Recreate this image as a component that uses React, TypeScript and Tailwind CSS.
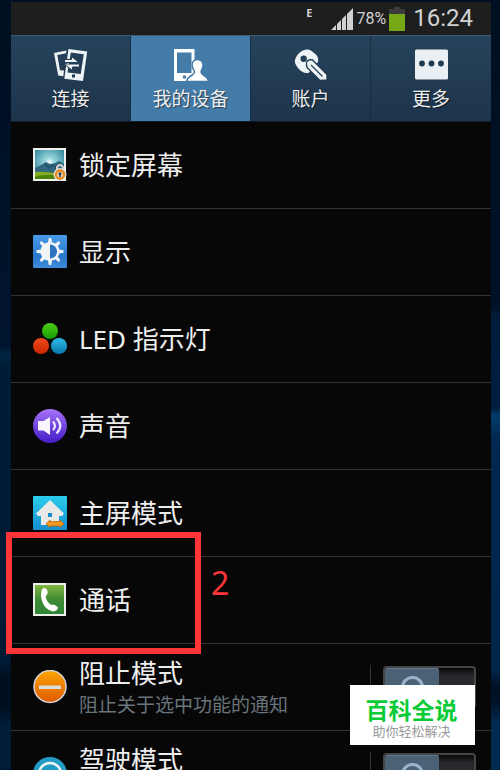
import React from "react";

const FONT = "font-['Noto_Sans','Noto_Sans_CJK_SC',sans-serif]";

function ConnectIcon() {
  return (
    <svg width="34" height="34" viewBox="0 0 34 34" aria-hidden="true">
      <path d="M12.500 2.500 L0 5 L4.200 27.500 L9.300 28.300 L10 22.500 L6 22.300 L3.300 7 L12 5.300 Z" fill="#eef3f5" />
      <path d="M14.500 1 L33.200 3.500 L29 33 L10.300 30.800 Z M16.800 4.500 L13.500 24.500 L26.700 26 L29.800 6.300 Z" fill="#eef3f5" fillRule="evenodd" />
      <path d="M10.500 11.500 H17.500 V8.500 L25 14.500 H10.500 Z M10 16 H25.500 V19 H18.500 V22.500 Z" fill="#eef3f5" stroke="#233e54" strokeWidth="1" />
      <rect x="18" y="26.500" width="3" height="3" fill="#213a50" />
    </svg>
  );
}

function DeviceIcon() {
  return (
    <svg width="34" height="34" viewBox="0 0 34 34" aria-hidden="true">
      <path d="M0 1 H20.500 V33 H0 Z M3 4.500 V25 H17.500 V4.500 Z" fill="#fff" fillRule="evenodd" />
      <rect x="9" y="27.500" width="3" height="3" fill="#447aa8" />
      <path d="M23.500 11.500 C19.500 11.500 17.800 14.300 18.200 18 C18.400 20.500 20.300 22 20.500 24 C20.500 28 13.500 27 12.500 33.500 H34.500 C34 27.500 27 28 27 24 C27.200 22 28.800 20.500 29 18 C29.300 14.300 27.500 11.500 23.500 11.500 Z" fill="#fff" stroke="#447aa8" strokeWidth="1.500" />
    </svg>
  );
}

function KeyIcon() {
  return (
    <svg width="34" height="34" viewBox="0 0 34 34" aria-hidden="true">
      <path d="M9 2.500 C12 1 15 1 17.500 3 L22 6.500 C24 9 24.500 11 24 14 L14.500 25 C9 25.500 4 22 1 15 C0 10 5 4 9 2.500 Z M6.500 10.700 A3.200 3.200 0 1 0 12.900 10.700 A3.200 3.200 0 1 0 6.500 10.700 Z" fill="#eef3f5" fillRule="evenodd" />
      <path d="M12.500 17 C11.500 13.500 14.500 11 18.500 12 L33 26.500 V32 L26 32.500 L13 19.500 Z" fill="#eef3f5" stroke="#233e54" strokeWidth="1.400" />
      <path d="M17 17 L28.500 28.500" stroke="#29445a" strokeWidth="1.200" />
    </svg>
  );
}

function MoreIcon() {
  return (
    <svg width="34" height="34" viewBox="0 0 34 34" aria-hidden="true">
      <rect x="1" y="1.500" width="33" height="30" rx="1.500" fill="#e9eff2" />
      {[8, 17.5, 27].map((x) => (
        <circle key={x} cx={x} cy="15.500" r="2.900" fill="#1d3a50" />
      ))}
    </svg>
  );
}

function LockScreenIcon() {
  return (
    <svg width="34" height="34" viewBox="0 0 34 34" aria-hidden="true">
      <defs>
        <radialGradient id="sky" cx=".5" cy=".42" r=".6">
          <stop offset="0" stopColor="#fff" />
          <stop offset=".25" stopColor="#9ad8dc" />
          <stop offset="1" stopColor="#388ca0" />
        </radialGradient>
      </defs>
      <rect width="33" height="33" fill="#f1f1ee" />
      <rect x="2" y="2" width="29" height="29" fill="url(#sky)" />
      <path d="M2 20 L8 17 L13 14 L17 16 L21 15.500 L26 13 L31 16 V27 H2 Z" fill="#326780" />
      <path d="M12 16 L16 20 L20 17 L24 21" fill="none" stroke="#244f68" strokeWidth="1.500" />
      <path d="M2 24 Q14 23 31 27 V31 H2 Z" fill="#83ad20" />
      <path d="M2 28.500 Q14 26 31 28 V31 H2 Z" fill="#4f8109" />
      <path d="M24 22 V19 Q27 15 30 19 V22" fill="none" stroke="#d5d3cf" strokeWidth="2" />
      <circle cx="27" cy="26.500" r="6.500" fill="#ddd" />
      <circle cx="27" cy="26.500" r="4" fill="none" stroke="#e88a18" strokeWidth="2.300" />
      <circle cx="27" cy="25.800" r="1.500" fill="#333" />
      <path d="M26.300 26 H27.700 V29 H26.300 Z" fill="#333" />
    </svg>
  );
}

function DisplayIcon() {
  return (
    <svg width="34" height="34" viewBox="0 0 34 34" aria-hidden="true">
      <defs>
        <linearGradient id="blue" x2="0" y2="1">
          <stop stopColor="#479be9" />
          <stop offset=".65" stopColor="#2877c8" />
          <stop offset="1" stopColor="#408bdc" />
        </linearGradient>
      </defs>
      <rect width="34" height="33" rx="1" fill="url(#blue)" />
      {[0, 45, 90, 135, 180, 225, 270, 315].map((a) => (
        <path key={a} d="M14.800 9 L15.800 3 H18.200 L19.200 9 Z" fill="#f1f4f6" transform={"rotate(" + a + " 17 16.500)"} />
      ))}
      <circle cx="17" cy="16.500" r="9.500" fill="#f1f4f6" />
      <path d="M17 9.500 A7 7 0 0 1 17 23.500 Z" fill="#2d75be" />
    </svg>
  );
}

function LedIcon() {
  return (
    <svg width="34" height="34" viewBox="0 0 34 34" aria-hidden="true">
      <defs>
        <linearGradient id="green" x2="0" y2="1"><stop stopColor="#4fcd13" /><stop offset="1" stopColor="#159c03" /></linearGradient>
        <linearGradient id="red" x2="0" y2="1"><stop stopColor="#ed4b1c" /><stop offset="1" stopColor="#c82500" /></linearGradient>
        <linearGradient id="cyan" x2="0" y2="1"><stop stopColor="#31bce8" /><stop offset="1" stopColor="#0876aa" /></linearGradient>
      </defs>
      <circle cx="17" cy="9" r="8" fill="url(#green)" />
      <circle cx="8" cy="24" r="8" fill="url(#red)" />
      <circle cx="26" cy="24" r="8" fill="url(#cyan)" />
    </svg>
  );
}

function SoundIcon() {
  return (
    <svg width="34" height="34" viewBox="0 0 34 34" aria-hidden="true">
      <defs>
        <linearGradient id="violet" x2="0" y2="1"><stop stopColor="#a873fa" /><stop offset=".5" stopColor="#7346df" /><stop offset="1" stopColor="#421cc5" /></linearGradient>
      </defs>
      <circle cx="17" cy="17" r="17" fill="url(#violet)" />
      <path d="M5 12 H10.500 L17 8 V26 L10.500 21.500 H5 Z" fill="#f7f4ff" />
      <path d="M20 12.500 Q24 17 20 21 M23.500 9 Q31 17 23.500 24.500" fill="none" stroke="#eee9ff" strokeWidth="2.200" />
    </svg>
  );
}

function HomeIcon() {
  return (
    <svg width="34" height="34" viewBox="0 0 34 34" aria-hidden="true">
      <defs>
        <linearGradient id="aqua" x2="0" y2="1"><stop stopColor="#2bcdeb" /><stop offset="1" stopColor="#168ed0" /></linearGradient>
      </defs>
      <rect width="34" height="34" rx="1" fill="url(#aqua)" />
      <path d="M17 4 L31 17.500 L29 20 H26 V29 H8 V20 H5 L3 17.500 Z" fill="#e9e9e7" />
      <rect x="15" y="17" width="4" height="4" fill="#1590c8" />
      <path d="M13 27.800 L17 24 V25.500 H27 V24 L31 27.800 L27 31.500 V30 H17 V31.500 Z" fill="#ee971e" stroke="#b85b08" strokeWidth=".7" />
    </svg>
  );
}

function CallIcon() {
  return (
    <svg width="34" height="34" viewBox="0 0 34 34" aria-hidden="true">
      <defs>
        <linearGradient id="leaf" x2="0" y2="1"><stop stopColor="#82b63f" /><stop offset=".5" stopColor="#3e8b33" /><stop offset="1" stopColor="#2f8536" /></linearGradient>
      </defs>
      <rect width="33" height="33" fill="#ededeb" />
      <rect x="2" y="2" width="29" height="29" fill="url(#leaf)" />
      <path d="M9 6.500 Q11 4 13.500 6 Q15.500 9 14 11.500 L12.500 13.500 Q13.500 18.500 18 22 Q21 20 25 24.500 Q24.500 28 20 28.500 Q12 27 9 18 Q7 11 9 6.500 Z" fill="#fff" />
    </svg>
  );
}

function BlockIcon() {
  return (
    <svg width="34" height="34" viewBox="0 0 34 34" aria-hidden="true">
      <defs>
        <linearGradient id="orange" x2="0" y2="1"><stop stopColor="#fba405" /><stop offset="1" stopColor="#df5a00" /></linearGradient>
      </defs>
      <circle cx="17" cy="16.500" r="16" fill="url(#orange)" stroke="#d5d5dc" strokeWidth="1.500" />
      <rect x="6" y="15.500" width="22" height="3.500" fill="#ddd" />
    </svg>
  );
}

function DriveIcon() {
  return (
    <svg width="34" height="34" viewBox="0 0 34 34" aria-hidden="true">
      <circle cx="17" cy="17" r="17" fill="#239bc5" />
      <circle cx="17" cy="17" r="11" fill="none" stroke="#f0f5f7" strokeWidth="2.500" />
      <path d="M9 16 Q17 10 25 16 L20 19 V26 H14 V19 Z" fill="#f0f5f7" />
    </svg>
  );
}

const tabs = [
  { label: "连接", icon: <ConnectIcon /> },
  { label: "我的设备", icon: <DeviceIcon />, active: true },
  { label: "账户", icon: <KeyIcon /> },
  { label: "更多", icon: <MoreIcon /> },
];

const rows = [
  { label: "锁定屏幕", icon: <LockScreenIcon /> },
  { label: "显示", icon: <DisplayIcon /> },
  { label: "LED 指示灯", icon: <LedIcon /> },
  { label: "声音", icon: <SoundIcon /> },
  { label: "主屏模式", icon: <HomeIcon /> },
  { label: "通话", icon: <CallIcon />, marked: true },
];

const modes = [
  { label: "阻止模式", detail: "阻止关于选中功能的通知", icon: <BlockIcon /> },
  { label: "驾驶模式", detail: "", icon: <DriveIcon /> },
];

function StatusBar() {
  return (
    <header className="flex h-[33px] items-center justify-end bg-[#1e1e1e] pr-[18px] text-[#d2d2d2]">
      <span className="mr-[18px] mb-3 text-[11px] leading-4 font-bold">E</span>
      <svg width="22" height="22" viewBox="0 0 22 22" aria-hidden="true">
        <path d="M0 22 L5 17 V22 Z M6 16 L10 12 V22 H6 Z M11 11 L15 7 V22 H11 Z M16 6 L22 0 V22 H16 Z" fill="#d2d2d2" />
      </svg>
      <span className="ml-1 text-base leading-6 font-['Roboto',sans-serif]">78%</span>
      <svg className="mr-2 ml-[3px]" width="16" height="24" viewBox="0 0 16 24" aria-hidden="true">
        <path d="M5 0 H11 V2 H16 V24 H0 V2 H5 Z" fill="#3b3b3b" />
        <rect y="7" width="16" height="17" fill="#77a817" />
      </svg>
      <time className="pb-px text-2xl leading-8 font-['Roboto',sans-serif]">16:24</time>
    </header>
  );
}

function ModeSwitch({ label }: { label: string }) {
  return (
    <label className="relative h-[42px] w-[93px] overflow-hidden rounded-[4px] border-2 border-[#454545] bg-linear-to-b from-[#08080a] to-[#29292d] to-20%">
      <input type="checkbox" aria-label={label} className="absolute inset-0 z-10 size-full opacity-0" />
      <span className="flex h-full w-[54px] items-center justify-center rounded-[2px] border-t border-[#62798e] bg-[#4b6175]">
        <span className="size-[23px] rounded-full border-[3px] border-[#9bb4cd]" />
      </span>
    </label>
  );
}

export default function App() {
  return (
    <div className={`relative flex h-screen overflow-hidden bg-[#001022] text-[#eee] ${FONT}`}>
      <div className="w-[11px] shrink-0 bg-[linear-gradient(#001022,#001228_30%,#00162e_45%,#002442_46%,#001b35_48%,#001a33_86%,#000f20_88%,#000f20_92%,#001c38_94%)]" />
      <div className="min-w-0 flex-1 pt-[2px]">
        <StatusBar />
        <nav className="grid h-[87px] grid-cols-4 border-t border-b border-t-[#395a72] border-b-[#101c28] bg-linear-to-b from-[#26435b] to-[#1d344b]">
          {tabs.map((tab) => (
            <button
              key={tab.label}
              className={`flex flex-col items-center border-r border-[#172d40] pt-3 last:border-r-0 ${tab.active ? "bg-[#437ba9]" : ""}`}
            >
              {tab.icon}
              <span className="mt-[3px] text-[19px] leading-7 [text-shadow:1px_1px_1px_#0008]">{tab.label}</span>
            </button>
          ))}
        </nav>
        <main className="bg-[#070707]">
          {rows.map((row) => (
            <section key={row.label} className="relative h-[87px] border-b border-[#343434]">
              <button className="flex size-full items-center gap-3 pl-[22px] text-left">
                {row.icon}
                <span className="text-[26px] leading-9">{row.label}</span>
              </button>
              {row.marked && (
                <div className="pointer-events-none absolute -top-[25px] -left-[5px] h-[122px] w-[195px] border-[6px] border-[#fb3538]">
                  <span className="absolute top-[25px] left-[199px] text-[32px] leading-10 text-[#fb3538]">2</span>
                </div>
              )}
            </section>
          ))}
          {modes.map((mode) => (
            <section key={mode.label} className="flex h-[87px] items-center border-b border-[#343434] pr-[15px] pl-[22px]">
              {mode.icon}
              <div className="ml-3 h-full flex-1 pt-[11px]">
                <h2 className="text-[26px] leading-9">{mode.label}</h2>
                <p className="text-[19px] leading-7 text-[#69757c]">{mode.detail}</p>
              </div>
              <span className="mr-3 h-11 w-px bg-[#333]" />
              <ModeSwitch label={mode.label} />
            </section>
          ))}
        </main>
      </div>
      <div className="w-[9px] shrink-0 bg-[linear-gradient(#001022,#001228_40%,#001c3a_41%,#001f40_53%,#003c6c_54%,#002850_57%,#00264a_87%,#001226_89%,#001226_91%,#002a50_94%)]" />
      <aside className="absolute right-[25px] bottom-[25px] flex h-[60px] w-[125px] flex-col items-center bg-white pt-[9px] pr-[2px] font-['Noto_Sans_CJK_SC',sans-serif]">
        <strong className="text-[23px] leading-[30px] font-bold text-[#08cb36]">百科全说</strong>
        <span className="text-[13px] leading-[14px] text-[#999]">助你轻松解决</span>
      </aside>
    </div>
  );
}
